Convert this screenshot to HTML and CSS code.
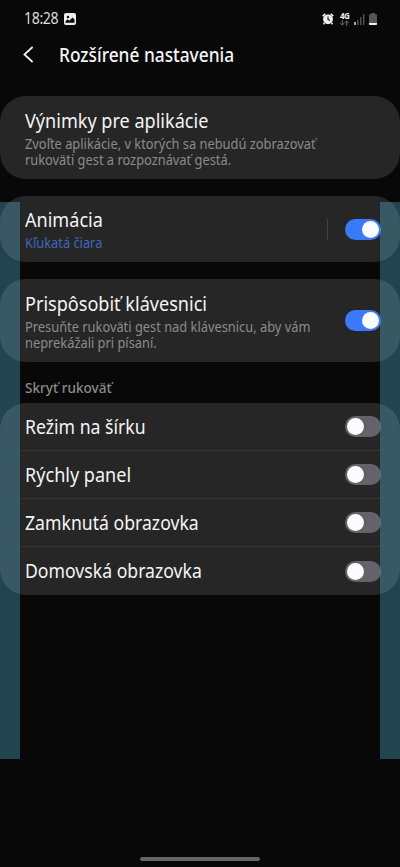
FILE: index.html
```html
<!DOCTYPE html>
<html lang="sk">
<head>
<meta charset="utf-8">
<meta name="viewport" content="width=device-width, initial-scale=1">
<title>Rozšírené nastavenia</title>
<link rel="stylesheet" href="styles.css">
</head>
<body>
<header class="status">
  <span class="clock"><span class="fit narrow">18:28</span></span>
  <svg class="picture" width="12" height="12" viewBox="0 0 12 12"><rect width="12" height="12" rx="2" fill="#eee"/><circle cx="4" cy="4" r="1.2" fill="#080808"/><path d="M1.5 9.8V8.2L3.7 6.3 5.3 7.8 8.5 4.6 10.5 6.6V9.8Z" fill="#080808"/></svg>
  <div class="status-icons">
    <svg width="12" height="12" viewBox="0 0 12 12"><path d="M.7 3.2 3.2.9M11.3 3.2 8.8.9M2.5 10 1.4 11.3M9.5 10l1.1 1.3" stroke="#eee" stroke-width="1.6"/><circle cx="6" cy="6.3" r="4.9" fill="#eee"/><path d="M6 3.6V6.5L8 7.5" fill="none" stroke="#111" stroke-width="1.1"/></svg>
    <div class="network"><span>4G</span><svg width="9" height="6" viewBox="0 0 9 6"><path d="M2.3 0V5M.3 3 2.3 5.1 4.2 3M6.7 6V1M4.8 3 6.7.9 8.7 3" fill="none" stroke="#777" stroke-width=".9"/></svg></div>
    <svg class="signal" width="11" height="12" viewBox="0 0 11 12"><path d="M1 9v3" stroke="#eee" stroke-width="1.4"/><path d="M3.8 7v5M6.8 4v8M9.7 1v11" stroke="#555" stroke-width="1.4"/></svg>
    <svg class="battery" width="8" height="12" viewBox="0 0 8 12"><path d="M2 0H6V1.3H7.2Q8 1.3 8 2.2V11Q8 12 7 12H1Q0 12 0 11V2.2Q0 1.3.8 1.3H2Z" fill="#555"/><path d="M0 10H8V11Q8 12 7 12H1Q0 12 0 11Z" fill="#eee"/></svg>
  </div>
</header>
<div class="appbar">
  <svg width="11" height="17" viewBox="0 0 11 17"><path d="M9.6 1 1.4 8.5 9.6 16" fill="none" stroke="#f4f4f4" stroke-width="1.7"/></svg>
  <h1><span class="fit narrow">Rozšírené nastavenia</span></h1>
</div>
<main>
  <section class="card exceptions">
    <div class="copy"><h2><span class="fit">Výnimky pre aplikácie</span></h2>
    <p><span class="fit">Zvoľte aplikácie, v ktorých sa nebudú zobrazovať</span><span class="fit">rukoväti gest a rozpoznávať gestá.</span></p></div>
  </section>
  <section class="card animation">
    <div class="copy"><h2><span class="fit">Animácia</span></h2>
    <p class="link"><span class="fit">Kľukatá čiara</span></p></div>
    <i class="separator"></i><i class="switch on"></i>
  </section>
  <section class="card keyboard">
    <div class="copy"><h2><span class="fit">Prispôsobiť klávesnici</span></h2>
    <p><span class="fit">Presuňte rukoväti gest nad klávesnicu, aby vám</span><span class="fit">neprekážali pri písaní.</span></p></div>
    <i class="switch on"></i>
  </section>
  <h3><span class="fit wide">Skryť rukoväť</span></h3>
  <section class="card list">
    <div class="row"><h2><span class="fit snug">Režim na šírku</span></h2><i class="switch"></i></div>
    <div class="row"><h2><span class="fit">Rýchly panel</span></h2><i class="switch"></i></div>
    <div class="row"><h2><span class="fit snug">Zamknutá obrazovka</span></h2><i class="switch"></i></div>
    <div class="row"><h2><span class="fit snug">Domovská obrazovka</span></h2><i class="switch"></i></div>
  </section>
</main>
<div class="handle left"></div>
<div class="handle right"></div>
<footer><i class="home"></i></footer>
</body>
</html>
```
FILE: styles.css
```css
* { box-sizing: border-box; }
body { margin: 0; position: relative; width: 400px; height: 867px; overflow: hidden; background: #080808; color: #f4f4f4; font-family: "Noto Sans", sans-serif; display: flex; flex-direction: column; }
h1, h2, h3, p { margin: 0; font-weight: 400; }
svg, i { display: block; flex: none; }
.fit { display: block; width: max-content; white-space: nowrap; transform-origin: left center; transform: scaleX(.951); }
.narrow { transform: scaleX(.911); }
.snug { transform: scaleX(.928); }
.wide { transform: scaleX(.97); }
.status { height: 37px; display: flex; align-items: center; padding: 0 23px 0 24px; }
.clock { width: 40px; margin-top: -1px; font-size: 15.5px; line-height: 20px; letter-spacing: -.4px; color: #ddd; }
.status-icons { margin-left: auto; display: flex; align-items: center; }
.network { width: 10px; height: 14px; margin: 0 4px 0 6px; }
.network span { display: block; font-size: 8px; font-weight: 700; line-height: 8px; letter-spacing: -.5px; }
.battery { margin-left: 4px; }
.appbar { height: 59px; padding: 0 24px 0 23px; display: flex; align-items: flex-start; gap: 25px; }
.appbar svg { margin-top: 9px; }
h1 { font-size: 19px; line-height: 26px; font-weight: 500; margin-top: 5px; }
.card { background: #262626; border-radius: 26px; display: flex; align-items: center; padding: 0 19px 0 25px; }
.copy { flex: 1; padding-top: 3px; }
h2 { font-size: 19px; line-height: 26px; }
.copy h2 { margin-top: -3px; }
p { font-size: 13.5px; line-height: 16px; color: #8b8b8b; }
.copy p { padding-top: 2px; }
.link { color: #3d68bb; }
.exceptions { height: 83px; margin-bottom: 17px; }
.animation { height: 66px; margin-bottom: 17px; }
.keyboard { height: 83px; }
h3 { height: 41px; padding: 16px 25px 0; font-size: 14px; line-height: 20px; font-weight: 500; color: #8b8b8b; }
.list { display: block; height: 192px; padding: 0 19px 0 21px; }
.row { height: 48px; display: flex; align-items: center; justify-content: space-between; padding-left: 4px; }
.row:not(:last-child) { border-bottom: 1px solid #353535; }
.row:not(:last-child) h2 { padding-top: 1px; }
.switch { width: 36px; height: 21px; border-radius: 11px; padding: 2px; background: #646369; }
.switch::before { content: ""; display: block; width: 17px; height: 17px; border-radius: 50%; background: #fcfcff; }
.switch.on { background: #3979fa; }
.switch.on::before { margin-left: auto; }
.separator { width: 1px; height: 21px; margin-right: 17px; background: #444; }
.handle { position: absolute; top: 202px; width: 20px; height: 557px; background: rgba(101, 208, 245, .3); }
.left { left: 0; }
.right { right: 0; }
footer { margin-top: auto; height: 10px; display: flex; justify-content: center; }
.home { width: 120px; height: 4px; border-radius: 2px; background: #666; }
```
